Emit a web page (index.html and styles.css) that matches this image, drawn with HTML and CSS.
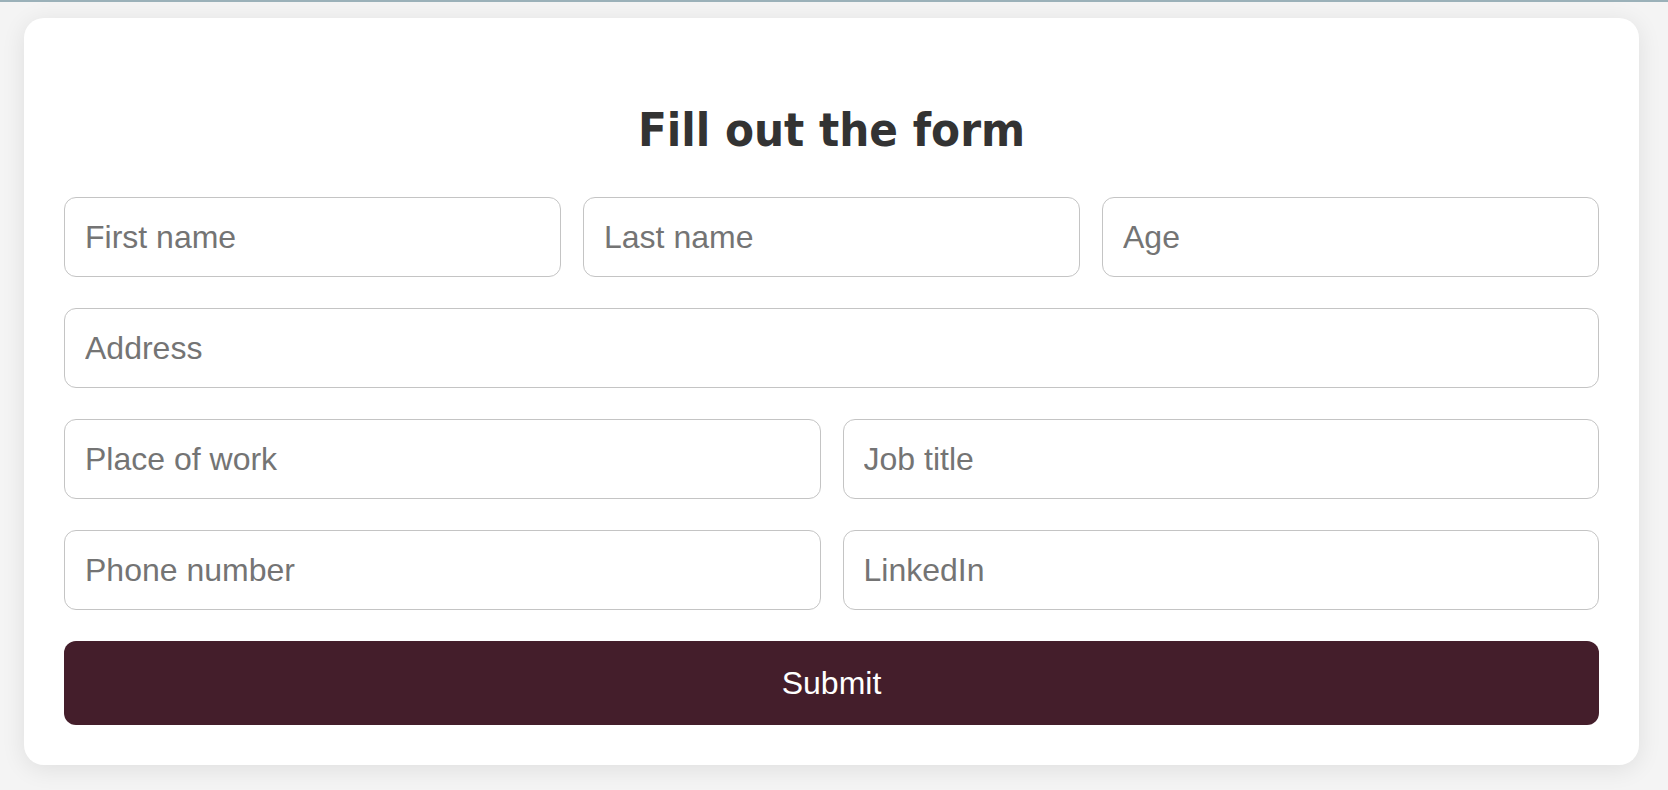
FILE: index.html
```html
<!DOCTYPE html>
<html lang="en">
<head>
<meta charset="utf-8">
<title>Form</title>
<link rel="stylesheet" href="styles.css">
</head>
<body>
<div class="topline"></div>
<main class="page">
  <form class="card">
    <h1 class="title">Fill out the form</h1>
    <div class="row row-3">
      <input class="field" type="text" placeholder="First name">
      <input class="field" type="text" placeholder="Last name">
      <input class="field" type="text" placeholder="Age">
    </div>
    <div class="row row-1">
      <input class="field" type="text" placeholder="Address">
    </div>
    <div class="row row-2">
      <input class="field" type="text" placeholder="Place of work">
      <input class="field" type="text" placeholder="Job title">
    </div>
    <div class="row row-2">
      <input class="field" type="text" placeholder="Phone number">
      <input class="field" type="text" placeholder="LinkedIn">
    </div>
    <button class="submit" type="button">Submit</button>
  </form>
</main>
</body>
</html>
```

FILE: styles.css
```css
* { box-sizing: border-box; }
html, body {
  margin: 0;
  padding: 0;
  background: #f4f4f4;
  height: 100%;
  overflow: hidden;
}
.topline {
  height: 2px;
  background: #9bb1b9;
}
.page {
  padding: 16px 29px 0 24px;
}
.card {
  background: #ffffff;
  border-radius: 20px;
  box-shadow: 0 4px 24px rgba(0, 0, 0, 0.09);
  padding: 40px;
  display: flex;
  flex-direction: column;
  gap: 31px;
}
.title {
  margin: 0 0 8px;
  padding-top: 44px;
  text-align: center;
  font-family: "DejaVu Sans Condensed", "DejaVu Sans", Tahoma, sans-serif;
  font-weight: bold;
  font-size: 47px;
  line-height: 56px;
  color: #333333;
}
.row {
  display: grid;
  column-gap: 22px;
}
.row-3 { grid-template-columns: 1fr 1fr 1fr; }
.row-2 { grid-template-columns: 1fr 1fr; }
.row-1 { grid-template-columns: 1fr; }
.field {
  height: 80px;
  width: 100%;
  border: 1.5px solid #c4c4c4;
  border-radius: 12px;
  padding: 0 20px;
  font-family: "Liberation Sans", Arial, sans-serif;
  font-size: 32px;
  color: #333;
  background: #fff;
  outline: none;
}
.field::placeholder {
  color: #747474;
  opacity: 1;
}
.submit {
  height: 84px;
  border: none;
  border-radius: 12px;
  background: #441e2b;
  color: #ffffff;
  font-family: "Liberation Sans", Arial, sans-serif;
  font-size: 32px;
  cursor: pointer;
}
```
